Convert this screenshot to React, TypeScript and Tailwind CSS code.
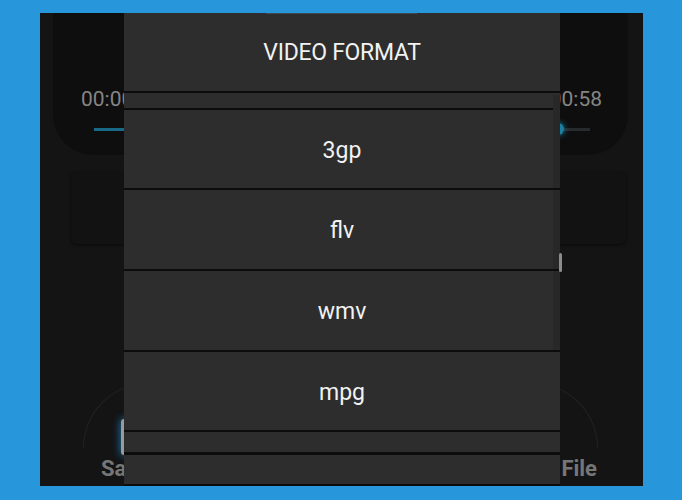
const formats = [
  { label: "3gp", h: "h-[80px]" },
  { label: "flv", h: "h-[81px]" },
  { label: "wmv", h: "h-[81px]" },
  { label: "mpg", h: "h-[80px]" },
];

function FormatDialog() {
  return (
    <div className="absolute top-0 bottom-0 left-[84px] flex w-[436px] flex-col bg-[#2d2d2d]">
      <div className="absolute top-0 left-[142px] h-px w-[151px] bg-[#3d4a54]" />
      <div className="absolute top-[82px] right-0 h-[255px] w-[7px] bg-[#282828]" />

      <div className="flex h-[80px] shrink-0 items-center justify-center border-b-2 border-[#0c0c0c] pt-[2px]">
        <span className="text-[23px] tracking-[-0.3px] text-[#f2f2f2]">VIDEO FORMAT</span>
      </div>
      <div className="h-[17px] shrink-0 border-b-2 border-[#0c0c0c]" />

      {formats.map((f) => (
        <div
          key={f.label}
          className={`relative flex shrink-0 items-center justify-center border-b-2 border-[#0c0c0c] pt-[4px] ${f.h}`}
        >
          <span className="text-[23px] text-[#f2f2f2]">{f.label}</span>
        </div>
      ))}

      <div className="h-[23px] shrink-0 border-b-[3px] border-[#0c0c0c]" />
      <div className="h-[31px] shrink-0 border-b-2 border-[#0c0c0c]" />
    </div>
  );
}

function PlayerBackground() {
  return (
    <div className="flex h-full flex-col">
      <div className="mx-[13px] mr-[15px] flex h-[142px] shrink-0 flex-col justify-end rounded-b-[40px] bg-[#0e0e0e] pb-[24px]">
        <div className="flex items-center justify-between pl-[28px] pr-[26px] text-[21px] leading-none text-[#858585]">
          <span>00:00</span>
          <span>00:58</span>
        </div>
        <div className="relative mt-[18px] ml-[41px] mr-[38px] h-[3px] bg-[#262b2e]">
          <div className="h-full w-[464px] bg-[#186a86]" />
          <div className="absolute top-[-5px] left-[458px] h-[12px] w-[12px] rounded-full bg-[#1a7fa0] shadow-[0_0_6px_#1a7fa0]" />
        </div>
      </div>

      <div className="mt-[17px] ml-[31px] h-[72px] w-[555px] rounded-[6px] bg-[#121212] shadow-[0_1px_3px_rgba(0,0,0,0.6)]" />

      <div className="mt-auto flex justify-between pr-[45px] pl-[43px] pb-[4px]">
        <div className="flex flex-col">
          <div className="relative h-[65px] w-[130px] rounded-t-full border border-b-0 border-[#232323]">
            <div className="absolute top-[35px] left-[37px] h-[36px] w-[34px] rounded-[3px] border-[4px] border-[#9a9a9a] shadow-[0_0_8px_#1e7fc0]" />
          </div>
          <span className="mt-[8px] ml-[18px] text-[22px] leading-[26px] font-bold text-[#767676]">Save</span>
        </div>
        <div className="flex flex-col items-end">
          <div className="relative h-[65px] w-[130px] rounded-t-full border border-b-0 border-[#232323]">
            <div className="absolute top-[50px] left-[30px] h-[10px] w-[10px] rounded-full bg-[#1e7fc0] shadow-[0_0_8px_#1e7fc0]" />
          </div>
          <span className="mt-[8px] mr-[1px] text-[22px] leading-[26px] font-bold text-[#767676]">Open File</span>
        </div>
      </div>
    </div>
  );
}

export default function App() {
  return (
    <div
      className="h-[500px] w-[682px] overflow-hidden bg-[#2896da] pt-[13px] pl-[40px]"
      style={{ fontFamily: "Roboto, 'Noto Sans', sans-serif" }}
    >
      <div className="relative h-[473px] w-[603px] overflow-hidden bg-[#141414]">
        <PlayerBackground />
        <FormatDialog />
        <div className="absolute top-[240px] left-[519px] h-[19px] w-[3px] rounded-sm bg-[#8c8c8c]" />
      </div>
    </div>
  );
}
